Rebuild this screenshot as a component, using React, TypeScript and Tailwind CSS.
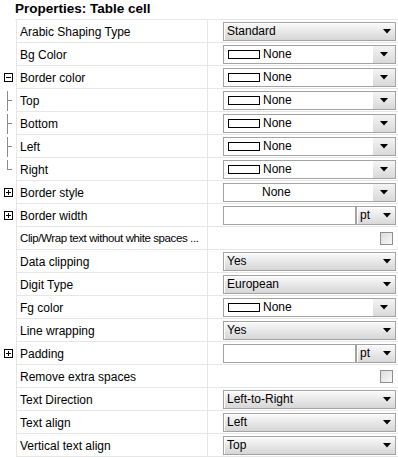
import { ReactNode } from "react";

type Kind = "select" | "color" | "center" | "unit" | "check";

type Row = {
  label: string;
  kind: Kind;
  value?: string;
  tree?: "minus" | "plus" | "child" | "last";
};

const rows: Row[] = [
  { label: "Arabic Shaping Type", kind: "select", value: "Standard" },
  { label: "Bg Color", kind: "color" },
  { label: "Border color", kind: "color", tree: "minus" },
  { label: "Top", kind: "color", tree: "child" },
  { label: "Bottom", kind: "color", tree: "child" },
  { label: "Left", kind: "color", tree: "child" },
  { label: "Right", kind: "color", tree: "last" },
  { label: "Border style", kind: "center", tree: "plus" },
  { label: "Border width", kind: "unit", tree: "plus" },
  { label: "Clip/Wrap text without white spaces ...", kind: "check" },
  { label: "Data clipping", kind: "select", value: "Yes" },
  { label: "Digit Type", kind: "select", value: "European" },
  { label: "Fg color", kind: "color" },
  { label: "Line wrapping", kind: "select", value: "Yes" },
  { label: "Padding", kind: "unit", tree: "plus" },
  { label: "Remove extra spaces", kind: "check" },
  { label: "Text Direction", kind: "select", value: "Left-to-Right" },
  { label: "Text align", kind: "select", value: "Left" },
  { label: "Vertical text align", kind: "select", value: "Top" },
];

function Arrow() {
  return (
    <svg width="8" height="5" viewBox="0 0 8 5" className="shrink-0">
      <path d="M0 0H8L4 4.5Z" fill="#000" />
    </svg>
  );
}

function Box({ children, className }: { children: ReactNode; className?: string }) {
  return (
    <div
      className={
        "h-[19px] flex items-center border border-[#a3a3a3] shadow-[inset_1px_1px_0_#fff] " +
        (className ?? "")
      }
    >
      {children}
    </div>
  );
}

function Swatch() {
  return <span className="w-[32px] h-[9px] border border-black bg-white shrink-0 ml-[4px] mr-[3px]" />;
}

function Value({ row }: { row: Row }) {
  if (row.kind === "check") {
    return (
      <div className="flex justify-end pr-[3px]">
        <span className="w-[13px] h-[13px] border border-[#8f8f8f] bg-gradient-to-br from-[#dcdcdc] to-[#f8f8f8]" />
      </div>
    );
  }
  if (row.kind === "unit") {
    return (
      <div className="flex">
        <div className="w-[133px] h-[19px] border border-[#a3a3a3] bg-white" />
        <Box className="flex-1 bg-gradient-to-b from-[#fafafa] to-[#d9d9d9] pl-[3px] pr-[4px] justify-between">
          <span>pt</span>
          <Arrow />
        </Box>
      </div>
    );
  }
  if (row.kind === "select") {
    return (
      <Box className="bg-gradient-to-b from-[#fafafa] to-[#d6d6d6] pl-[3px] pr-[4px] justify-between">
        <span>{row.value}</span>
        <Arrow />
      </Box>
    );
  }
  return (
    <Box className="bg-white">
      {row.kind === "color" ? (
        <>
          <Swatch />
          <span className="flex-1">None</span>
        </>
      ) : (
        <span className="flex-1 pl-[38px]">None</span>
      )}
      <span className="w-[22px] h-full flex items-center justify-center bg-gradient-to-b from-[#f4f4f4] to-[#d9d9d9]">
        <Arrow />
      </span>
    </Box>
  );
}

function Gutter({ tree }: { tree?: Row["tree"] }) {
  if (tree === "minus" || tree === "plus") {
    return (
      <div className="w-[16px] flex items-center justify-center">
        <span className="relative w-[9px] h-[9px] border border-black bg-white">
          <span className="absolute left-[1px] top-[3px] w-[5px] h-[1px] bg-black" />
          {tree === "plus" && <span className="absolute left-[3px] top-[1px] w-[1px] h-[5px] bg-black" />}
        </span>
      </div>
    );
  }
  if (tree === "child" || tree === "last") {
    return (
      <div className="w-[16px] relative">
        <span
          className={
            "absolute left-[7px] top-[2px] w-[1px] bg-[#8a8a8a] " + (tree === "last" ? "h-[10px]" : "h-[20px]")
          }
        />
        <span className="absolute left-[7px] top-[11px] w-[5px] h-[1px] bg-[#8a8a8a]" />
      </div>
    );
  }
  return <div className="w-[16px]" />;
}

export default function App() {
  return (
    <div
      className="w-[398px] h-[457px] bg-white text-black text-[12px] overflow-hidden"
      style={{ fontFamily: '"Liberation Sans", Arial, sans-serif' }}
    >
      <div className="h-[20px] flex">
        <div className="w-[15px]" />
        <div className="flex-1 border-b border-[#e6e6e6] font-bold text-[13.5px] leading-[18px]">
          Properties: Table cell
        </div>
      </div>
      {rows.map((row) => (
        <div key={row.label} className="h-[23px] flex">
          <Gutter tree={row.tree} />
          <div className="flex-1 flex border-l border-b border-[#e6e6e6]">
            <div
              className={
                "w-[191px] border-r border-[#e6e6e6] flex items-center pl-[3px] pt-[1px] whitespace-nowrap " +
                (row.kind === "check" && row.label.length > 30 ? "tracking-[-0.4px] text-[11.5px]" : "")
              }
            >
              {row.label}
            </div>
            <div className="flex-1 flex flex-col justify-center pl-[15px] pr-[2px]">
              <Value row={row} />
            </div>
          </div>
        </div>
      ))}
    </div>
  );
}
